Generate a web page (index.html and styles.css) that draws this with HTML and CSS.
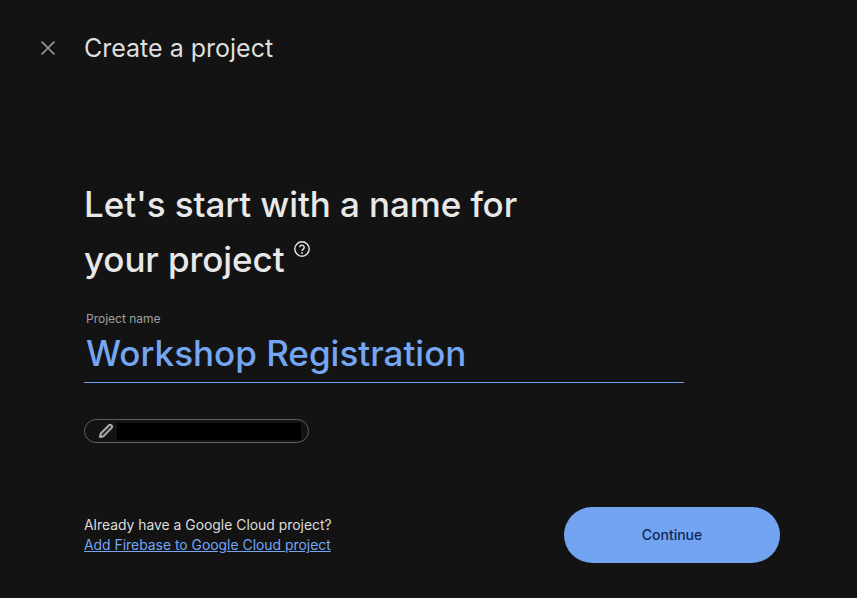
FILE: index.html
```html
<!DOCTYPE html>
<html lang="en">
<head>
<meta charset="utf-8">
<title>Create a project</title>
<link rel="stylesheet" href="styles.css">
</head>
<body>
<div class="page">
  <header class="topbar">
    <button class="close" aria-label="Close">
      <svg width="16" height="16" viewBox="0 0 16 16"><path d="M1.5 1.5 14.5 14.5M14.5 1.5 1.5 14.5" stroke="#9a9a9a" stroke-width="1.7" fill="none"/></svg>
    </button>
    <h1 class="title">Create a project</h1>
  </header>
  <main class="main">
    <h2 class="headline">Let's start with a name for<br>your project<svg class="help" width="18" height="18" viewBox="0 0 18 18"><circle cx="9" cy="9" r="7.2" stroke="#e8e8e8" stroke-width="1.4" fill="none"/><path d="M6.8 7.3a2.2 2.2 0 1 1 3.6 1.7c-.8.6-1.4 1-1.4 2" stroke="#e8e8e8" stroke-width="1.4" fill="none"/><circle cx="9" cy="12.9" r=".9" fill="#e8e8e8"/></svg></h2>
    <div class="field">
      <label class="label">Project name</label>
      <div class="value">Workshop Registration</div>
    </div>
    <div class="chip">
      <svg class="pencil" width="16" height="16" viewBox="0 0 16 16"><path d="M2 14 2.6 10.6 11.2 2a1.2 1.2 0 0 1 1.7 0l1 1a1.2 1.2 0 0 1 0 1.7L5.4 13.4Z" stroke="#adadad" stroke-width="1.9" fill="#2a2a2b" stroke-linejoin="round"/><path d="M2.2 13.8 2.6 11 5 13.4Z" fill="#adadad"/></svg>
      <span class="redact"></span>
    </div>
    <div class="footer">
      <div class="existing">
        <div class="existing-q">Already have a Google Cloud project?</div>
        <a class="existing-link" href="#">Add Firebase to Google Cloud project</a>
      </div>
      <button class="continue">Continue</button>
    </div>
  </main>
</div>
</body>
</html>
```
FILE: styles.css
```css
* { box-sizing: border-box; }
html, body { margin: 0; height: 100%; }
body { background: #131314; overflow: hidden; }
.page { width: 857px; height: 598px; display: flex; flex-direction: column; }
.topbar { display: flex; align-items: center; height: 32px; margin-top: 32px; padding-left: 40px; }
.close { width: 16px; height: 16px; padding: 0; border: 0; background: none; display: flex; }
.title { margin: 0 0 0 28px; font: 400 25px/32px Inter, sans-serif; color: #dedede; }
.main { padding: 0 77px 0 84px; display: flex; flex-direction: column; }
.headline { margin: 113px 0 0; font: 450 35px/55px Inter, sans-serif; letter-spacing: -0.1px; color: #e8e8e8; }
.help { vertical-align: 14px; margin-left: 9px; }
.field { width: 600px; margin-top: 24px; border-bottom: 1px solid #6ea2f2; padding-bottom: 7px; }
.label { display: block; margin-left: 2px; font: 400 12px/16px Inter, sans-serif; color: #a0a0a0; }
.value { margin-left: 2px; margin-top: 4px; font: 450 35px/44px Inter, sans-serif; color: #75a6f3; }
.chip { width: 225px; height: 24px; margin-top: 36px; border: 1px solid #5c5e60; border-radius: 12px; display: flex; align-items: center; padding-left: 13px; }
.redact { width: 184px; height: 17px; margin-left: 3px; background: #000; }
.footer { display: flex; justify-content: space-between; align-items: center; margin-top: 64px; }
.existing { font: 400 13.9px/20px Inter, sans-serif; }
.existing-q { color: #dcdcdc; }
.existing-link { color: #75a6f3; text-decoration: underline; }
.continue { width: 216px; height: 56px; border: 0; border-radius: 28px; background: #72a4f2; color: #0e2a58; font: 500 14px/20px Inter, sans-serif; }
```
